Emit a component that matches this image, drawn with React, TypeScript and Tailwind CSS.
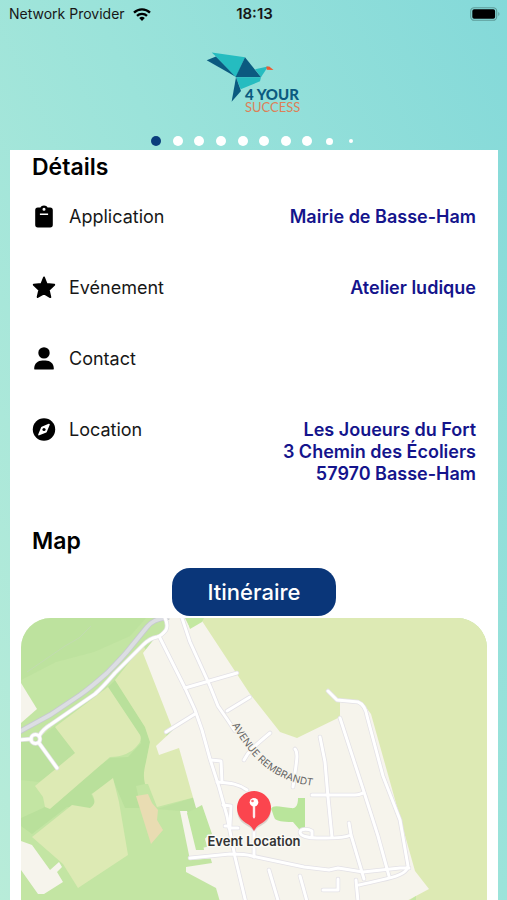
import type { ReactNode } from "react";

const ClipboardIcon = () => (
  <svg viewBox="0 0 24 24" className="h-6 w-6 fill-black" aria-hidden="true">
    <path
      fillRule="evenodd"
      d="M5.800 2.600h2.600C9 1.200 10.200.4 12 .4s3 .8 3.600 2.200h2.600a2.600 2.600 0 0 1 2.600 2.600v14.600a2.600 2.600 0 0 1-2.600 2.600H5.800a2.600 2.600 0 0 1-2.600-2.600V5.200a2.600 2.600 0 0 1 2.600-2.600zM12 2.700a1.500 1.500 0 1 0 0 3 1.500 1.500 0 0 0 0-3zM7.900 8.600v1.300h8.200V8.600z"
    />
  </svg>
);

const StarIcon = () => (
  <svg viewBox="0 0 24 24" className="h-6 w-6 fill-black" aria-hidden="true">
    <path
      stroke="#000"
      strokeWidth="2"
      strokeLinejoin="round"
      d="M12 1.500l2.600 6.500 7.600.8-5.500 5.100 1.600 7.200-6.300-3.600L5.700 21l1.600-7.100-5.500-5.100 7.600-.8z"
    />
  </svg>
);

const PersonIcon = () => (
  <svg viewBox="0 0 24 24" className="h-6 w-6 fill-black" aria-hidden="true">
    <circle cx="12" cy="5.900" r="5.700" />
    <path d="M2.200 21.400c0-5 3.600-8 8.300-8h3c4.700 0 8.300 3 8.300 8 0 .8-.4 1.200-1.200 1.200H3.400c-.8 0-1.200-.4-1.200-1.200z" />
  </svg>
);

const CompassIcon = () => (
  <svg viewBox="0 0 24 24" className="h-6 w-6" aria-hidden="true">
    <circle cx="12" cy="11.500" r="11.200" />
    <path
      d="M17 6.500l-3 7.200-7 2.900 3-7.200z"
      fill="#fff"
      stroke="#fff"
      strokeWidth="1.600"
      strokeLinejoin="round"
    />
    <circle cx="12" cy="11.500" r="1.600" />
  </svg>
);

const Logo = () => (
  <svg
    viewBox="0 0 96 64"
    className="h-16 w-24"
    role="img"
    aria-label="4 Your Success"
  >
    <path fill="#0b5a80" d="M.7 8.200L10 4.500l20.500 20.800z" />
    <path fill="#25bcc0" d="M5.700.5L39 5.300l-9 20L10 4.500z" />
    <path fill="#25bcc0" d="M49 17.200l13-2.700-7 10.800z" />
    <path fill="#0b5a80" d="M39 5.300l16 20H29.500z" />
    <path fill="#25bcc0" d="M30 25.300h25l-1 4-19.300 8z" />
    <path fill="#0b5a80" d="M30 25.300l5 13.700-9.400 10.800z" />
    <path fill="#ee5a30" d="M60.300 14.600h3l4.200 3.400-6.700-.3z" />
    <text
      x="39"
      y="48"
      fill="#0b5a80"
      fontFamily="Lato, sans-serif"
      fontSize="15"
      fontWeight="900"
    >
      4 YOUR
    </text>
    <text
      x="39"
      y="60"
      fill="#dd8058"
      fontFamily="Lato, sans-serif"
      fontSize="13"
    >
      SUCCESS
    </text>
  </svg>
);

const StatusBar = () => (
  <div className="grid h-7 grid-cols-3 items-center pr-[7px] pl-[9px] text-neutral-900">
    <div className="flex items-center gap-2 whitespace-nowrap text-sm">
      Network Provider
      <svg viewBox="0 0 18 13" className="h-[13px] w-[18px] shrink-0" aria-hidden="true">
        <g fill="none" stroke="#000" strokeWidth="2.300">
          <path d="M1 4.600a11.400 11.400 0 0 1 16 0" />
          <path d="M4 7.900a7.100 7.100 0 0 1 10 0" />
        </g>
        <path d="M6.200 10.100a4 4 0 0 1 5.600 0L9 13z" />
      </svg>
    </div>
    <time className="text-center text-[15px] font-semibold">18:13</time>
    <svg viewBox="0 0 30 14" className="h-[14px] w-[30px] justify-self-end" aria-hidden="true">
      <rect x=".7" y=".7" width="26" height="12.600" rx="3.600" fill="none" stroke="#5d9c99" strokeWidth="1.100" />
      <rect x="2.300" y="2.300" width="22.800" height="9.400" rx="1.800" />
      <path d="M28.300 5c1.500.6 1.500 3.400 0 4z" fill="#5d9c99" />
    </svg>
  </div>
);

const dots = [
  "h-[10px] w-[10px] bg-[#0a3d7c]",
  "h-[10px] w-[10px] bg-white",
  "h-[10px] w-[10px] bg-white",
  "h-[10px] w-[10px] bg-white",
  "h-[10px] w-[10px] bg-white",
  "h-[10px] w-[10px] bg-white",
  "h-[10px] w-[10px] bg-white",
  "h-[10px] w-[10px] bg-white",
  "h-[7px] w-[7px] bg-white",
  "h-1 w-1 bg-white",
];

const Pagination = () => (
  <div className="mx-auto grid w-[216px] grid-cols-10 place-items-center">
    {dots.map((dot, index) => (
      <span key={index} className={`rounded-full ${dot}`} />
    ))}
  </div>
);

type Detail = {
  label: string;
  icon: ReactNode;
  lines: string[];
};

const details: Detail[] = [
  { label: "Application", icon: <ClipboardIcon />, lines: ["Mairie de Basse-Ham"] },
  { label: "Evénement", icon: <StarIcon />, lines: ["Atelier ludique"] },
  { label: "Contact", icon: <PersonIcon />, lines: [] },
  {
    label: "Location",
    icon: <CompassIcon />,
    lines: ["Les Joueurs du Fort", "3 Chemin des Écoliers", "57970 Basse-Ham"],
  },
];

// Streets are drawn twice: a soft grey casing, then the white line
const roads = [
  "M18 130l13-1M39 126c3-5 6-8 11-11l45-31c8-7 14-14 20-21l28-28c5-5 8-7 14-8 4-1 6-3 9-7 2-4 1-8-1-12",
  "M39 133l18 25",
  "M160 28l25 50 10 22 7 20 8 29 9 28 8 29 8 41 11 46",
  "M182 8l8 24 20 44 8 20 9 13 8 12",
  "M185 78l52-15M227 101l23-14M166 122l29-18",
  "M244 150c4-8 8-12 26-27M211 150l10 1 1 21",
  "M217 172c14 1 22 2 30 8M223 195l8 1-1 20-5 0M229 218l9 0",
  "M190 248l40-4c8 0 16 0 22 2l52 11 25 3 9-2 25 4 37-4 9 0",
  "M254 220v27",
  "M328 81l9 9 21 2c5 2 8 8 9 14l16 60 17 44 8 46-1 3c-5 8-22 10-48 16",
  "M340 108l24 74 14 44 11 40",
  "M320 127l5 25 3 35 4 40",
  "M295 139c4 4 1 15-2 38M312 185l38 0c8 0 8 0 13-2",
  "M349 213l2 12 13 44M351 225c-9 4-22 3-34 3-9 0-17-2-17-6 1-4 9-3 12-1v5",
  "M269 260l11 37 9 2M300 266l8 29 9 0M338 269v11h-15M356 270l3 32",
];

const Roads = ({ color, width }: { color: string; width: number }) => (
  <g fill="none" stroke={color} strokeWidth={width} strokeLinecap="round" strokeLinejoin="round">
    {roads.map((d) => (
      <path key={d} d={d} />
    ))}
    <circle cx="35.500" cy="129" r="4.500" />
  </g>
);

const EventMap = () => (
  <svg
    viewBox="21 8 466 282"
    preserveAspectRatio="xMidYMin slice"
    className="absolute inset-0 h-full w-full"
    role="img"
    aria-label="Event Location"
  >
    <rect x="21" y="8" width="466" height="282" fill="#c3e5a3" />

    {/* Darker woodland */}
    <g fill="#b9e09b">
      <path d="M21 8h125l-16 18-36 16-38 10-35 18z" opacity=".6" />
      <path d="M55 116l24 28-40 28-18-2v-38l14-1z" opacity=".7" />
      <path d="M108 77l7-7 30 47 5 15-4 20-1 22-9 2 5 22h-16l-12-28-22 14 4 8-5 8-23-3-35 27-11-8v-8l22-10 67-50 18-1 13-14-1-8z" />
      <path d="M157 199l45-14 10 37-11 13-21-34z" opacity=".7" />
    </g>

    {/* Fields */}
    <g fill="#ddeab4">
      <path d="M55 117l53-40 32 48c2 4 0 8-4 12-4 5-14 10-26 10l-60 52-5-2-2-10-8-11 40-33z" />
      <path d="M115 70l28-35 40 72-17 16 2 10 19-7 16 59-46 12-9-23h-3c-2-8-1-14 1-22l4-20-5-15z" />
      <path d="M32 227l40-32 18 3c5-3 6-7 2-14l21-16 6 24 9 53-50 33-15-24z" />
      <path d="M200 8h287v282H400L270 150z" />
    </g>
    <path fill="#e9dcb2" d="M136 186l12-2 4 9 6 7-1 10 6 10-12 14z" />

    {/* Built-up area */}
    <g fill="#f6f4ec">
      <path d="M143 43l12-15 10-4 3-16h17l5 10 12-7 48 73 30 38 17 6 43-21v-17l22 2 9 12 44 157 14 18-28 15-178 8-7-24-30-16v-5l26-4-14-48-19-67-20 7-3-9 17-16z" />
      <path d="M21 73l16 26-16 14z" />
      <path d="M21 231l11 4 18 25 9-8 3 5-5 5 6 10-19 12h-6l-17-24z" />
      <path d="M180 201h7l10 38 14-3 8 12-29 2z" />
    </g>
    <path fill="#c3e8a0" d="M187 8h17l-2 4-12 7z" />
    <path fill="#c6e8a5" d="M395 300l21-14v14z" />
    <path fill="#b9e59b" d="M271 199c2-5 10-2 20-1 5 1 7-3 7-10h7v31h-6l-6-7c-12 0-15-1-18-3-2-3-2-7-4-10z" />
    <path fill="#bfe5a0" d="M187 203l15-8 10 29c-8 4-10 6-8 16h-8z" />

    {/* Railway */}
    <g fill="none">
      <path
        d="M17 123l33-18 30-20c10-7 18-14 27-22 10-10 16-16 23-25l17-21c4-5 9-8 22-10"
        stroke="#c6c9ce"
        strokeWidth="5.500"
      />
      <path
        d="M17 123l33-18 30-20c10-7 18-14 27-22 10-10 16-16 23-25l17-21c4-5 9-8 22-10"
        stroke="#dcdee3"
        strokeWidth="3.800"
      />
      <path d="M27 62l38-26 14-8 12-12" stroke="#c2dbb0" strokeWidth="1" />
    </g>

    <Roads color="#e3e1e6" width={4.500} />
    <Roads color="#ffffff" width={3} />

    <path id="avenue" d="M232 115c20 34 40 58 90 62" fill="none" />
    <text
      fill="#666"
      stroke="#f6f4ec"
      strokeWidth="2"
      paintOrder="stroke"
      fontFamily="Inter, sans-serif"
      fontSize="10"
    >
      <textPath href="#avenue">AVENUE REMBRANDT</textPath>
    </text>

    {/* Event marker */}
    <g>
      <path
        d="M254 182a17 17 0 0 1 8 32c-3 2-6 3-8 7-2-4-5-5-8-7a17 17 0 0 1 8-32z"
        fill="#8c6b6b"
        opacity=".25"
        transform="translate(0 1)"
      />
      <path
        d="M254 181a17 17 0 0 1 8.500 31.700c-3.500 2-6.500 3.800-8.500 8.300-2-4.500-5-6.300-8.500-8.300A17 17 0 0 1 254 181z"
        fill="#fb454e"
      />
      <circle cx="254" cy="192.300" r="4.300" fill="#fff" />
      <path d="M253.200 195h1.600v12l-.8 1.300-.8-1.300z" fill="#fff" stroke="#fff" strokeWidth=".6" />
      <circle cx="252.500" cy="191" r="1.300" fill="#fb6a70" />
    </g>
    <text
      x="254"
      y="235.500"
      textAnchor="middle"
      fill="#333"
      stroke="#fbfaf6"
      strokeWidth="3"
      strokeLinejoin="round"
      paintOrder="stroke"
      fontFamily="Inter, sans-serif"
      fontSize="13"
      fontWeight="600"
    >
      Event Location
    </text>
  </svg>
);

export default function App() {
  return (
    <div className="flex min-h-screen flex-col bg-[linear-gradient(65deg,#b8ecd9_0%,#9be3da_55%,#84d9d9_100%)] font-['Inter',sans-serif] text-black">
      <StatusBar />

      <header className="flex flex-col gap-[20px] pt-[24px] pb-1">
        <div className="flex justify-center">
          <Logo />
        </div>
        <Pagination />
      </header>

      <main className="mr-[9px] ml-[10px] flex flex-1 flex-col bg-white">
        <section className="px-[22px]">
          <h2 className="text-[23px] leading-[34px] font-semibold">Détails</h2>

          <dl className="mt-[22px] flex flex-col gap-[49px] text-lg leading-[22px]">
            {details.map((detail) => (
              <div key={detail.label} className="flex items-start justify-between">
                <dt className="flex h-[22px] items-center gap-[13px] text-neutral-900">
                  {detail.icon}
                  {detail.label}
                </dt>
                <dd className="text-right font-semibold text-[#14148c]">
                  {detail.lines.map((line) => (
                    <p key={line}>{line}</p>
                  ))}
                </dd>
              </div>
            ))}
          </dl>
        </section>

        <section className="mt-[39px] flex flex-1 flex-col">
          <h2 className="px-[22px] text-[23px] leading-[34px] font-semibold">Map</h2>

          <button
            type="button"
            className="mx-auto mt-[10px] h-12 rounded-[18px] bg-[#0a3679] px-9 text-[22px] font-medium text-white"
          >
            Itinéraire
          </button>

          <div className="relative mx-[11px] mt-[2px] min-h-[282px] flex-1 overflow-hidden rounded-t-[30px]">
            <EventMap />
          </div>
        </section>
      </main>
    </div>
  );
}
